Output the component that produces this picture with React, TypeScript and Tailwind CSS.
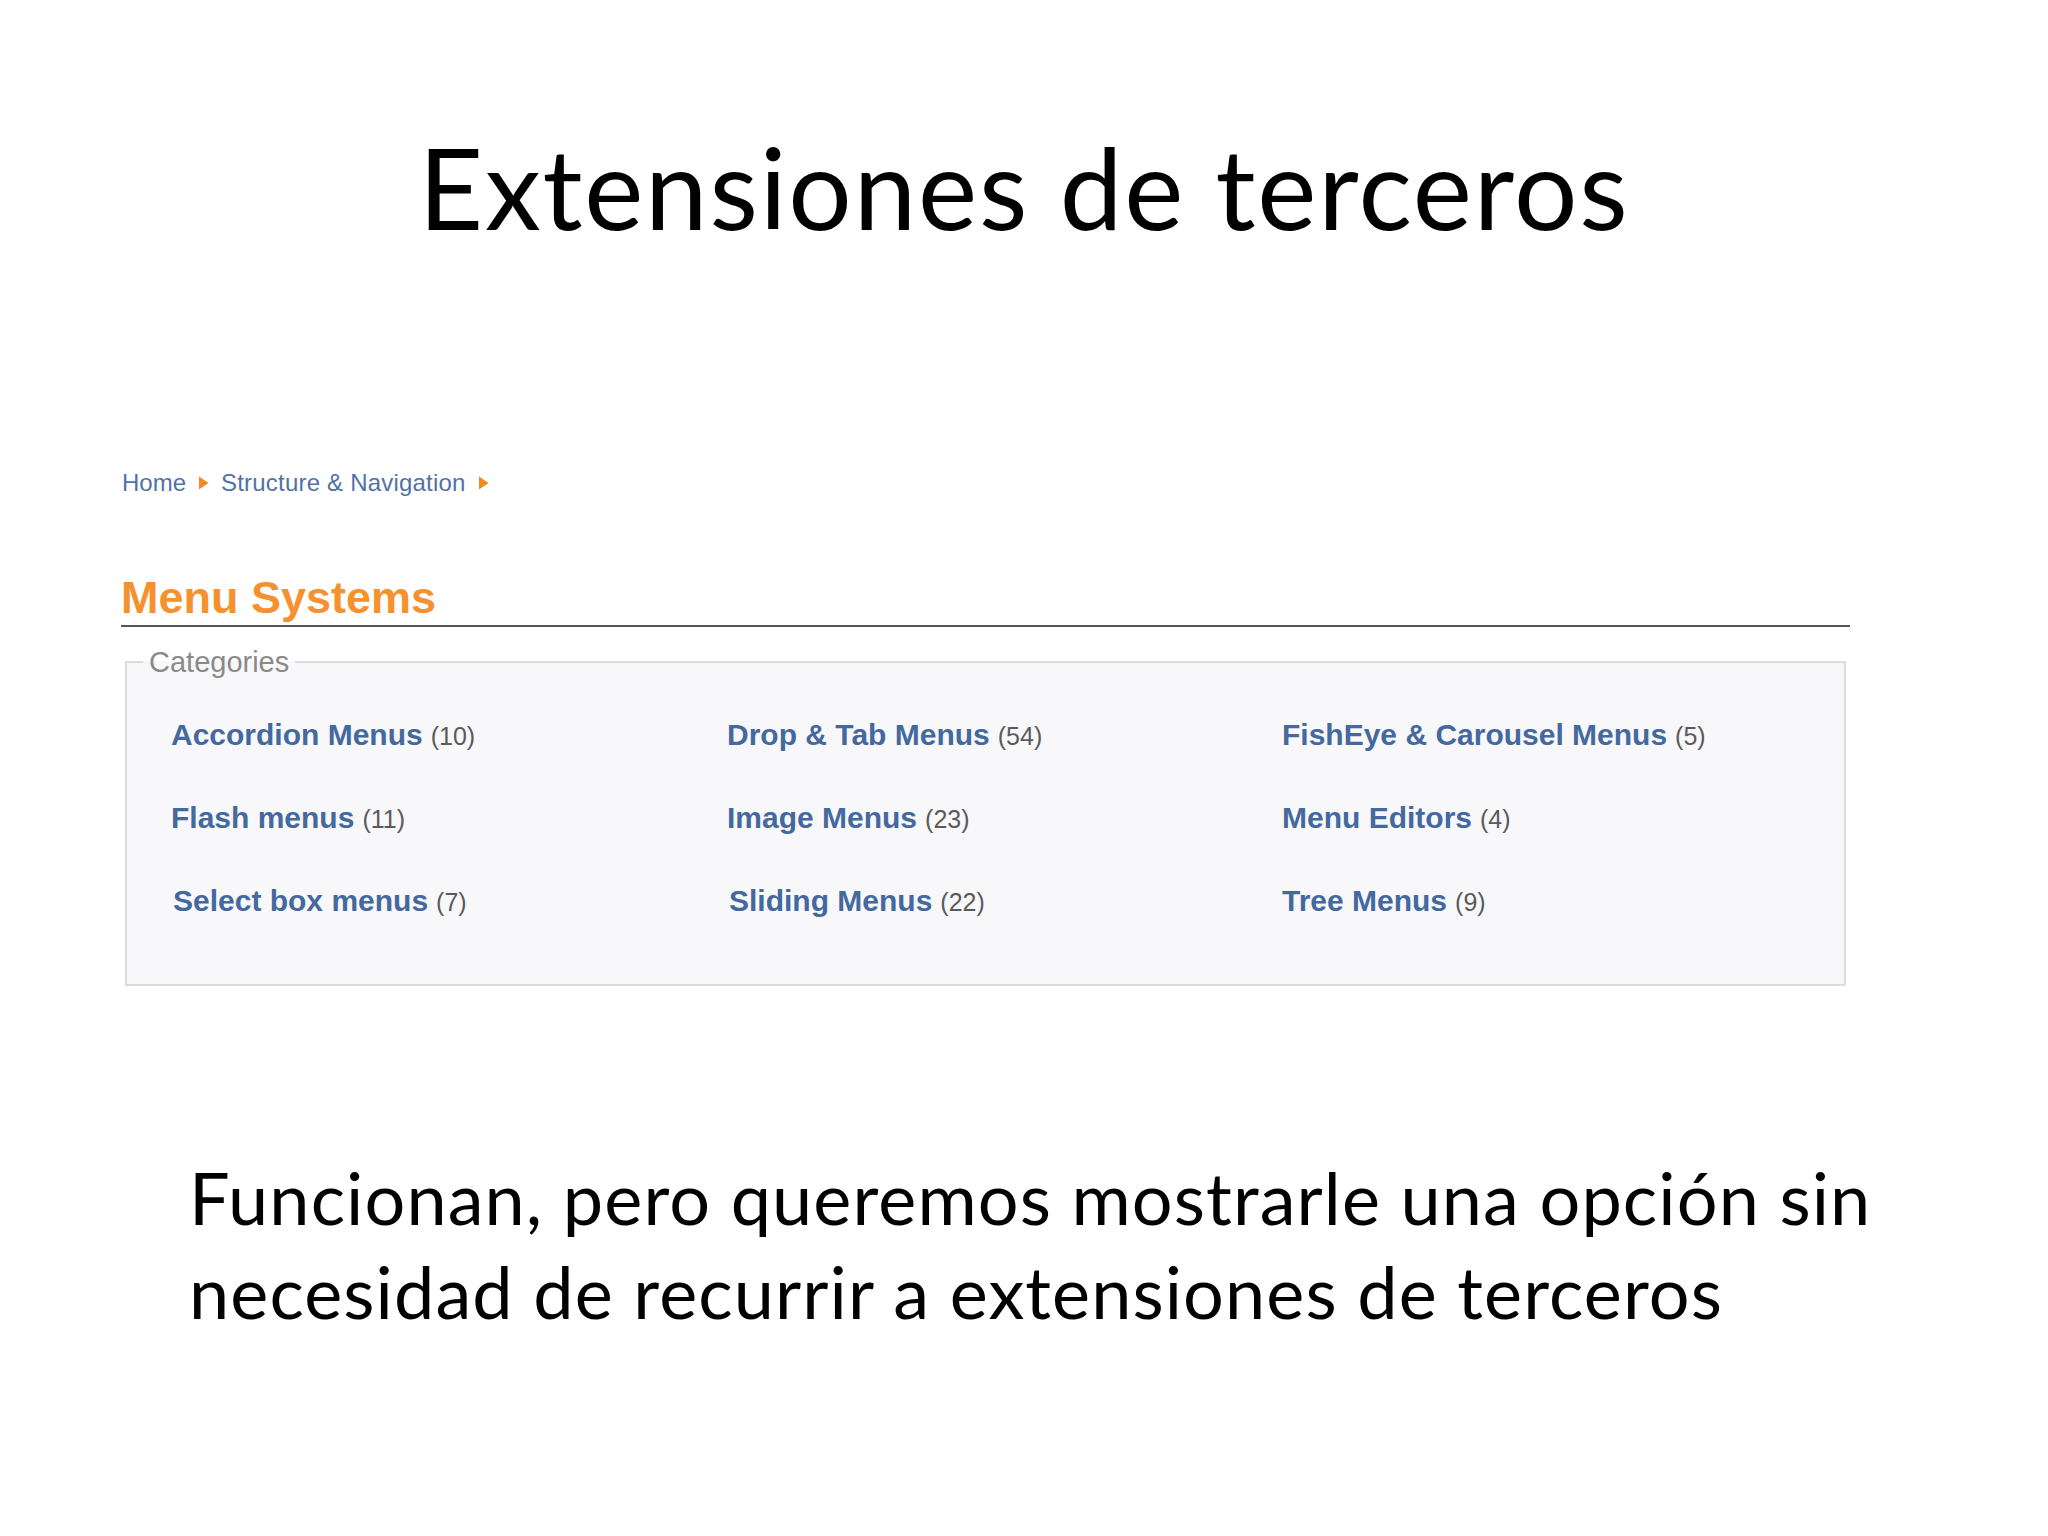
type Category = {
  name: string;
  count: number;
  nudge?: string;
};

const rows: Category[][] = [
  [
    { name: 'Accordion Menus', count: 10 },
    { name: 'Drop & Tab Menus', count: 54 },
    { name: 'FishEye & Carousel Menus', count: 5 },
  ],
  [
    { name: 'Flash menus', count: 11 },
    { name: 'Image Menus', count: 23 },
    { name: 'Menu Editors', count: 4 },
  ],
  [
    { name: 'Select box menus', count: 7, nudge: 'ml-[2px]' },
    { name: 'Sliding Menus', count: 22, nudge: 'ml-[2px]' },
    { name: 'Tree Menus', count: 9 },
  ],
];

function Arrow() {
  return (
    <svg width="11" height="14" viewBox="0 0 11 14" className="shrink-0">
      <path d="M1 0.5 L10.5 7 L1 13.5 Z" fill="#f28a1c" />
    </svg>
  );
}

function Breadcrumb() {
  return (
    <div className="flex h-[26px] items-center gap-[12px] pl-px text-[24px] leading-[26px] text-[#5271a6] [font-family:'Liberation_Sans',Arial,sans-serif]">
      <span>Home</span>
      <Arrow />
      <span className="tracking-[0.2px]">Structure &amp; Navigation</span>
      <Arrow />
    </div>
  );
}

function CategoryBox() {
  return (
    <fieldset className="ml-[4px] mt-[20px] w-[1721px] border-2 border-[#dcdcdc] bg-[#f8f8fa] pb-[42px] pt-[16px] [font-family:'Liberation_Sans',Arial,sans-serif]">
      <legend className="ml-[16px] px-[6px] text-[29px] leading-[30px] text-[#8a8a8a]">Categories</legend>
      <div className="grid grid-cols-[556px_555px_1fr] pl-[44px]">
        {rows.flat().map((c) => (
          <div key={c.name} className={`h-[83px] whitespace-nowrap leading-[83px] ${c.nudge ?? ''}`}>
            <span className="text-[30px] font-bold text-[#44699f]">{c.name}</span>
            <span className="ml-[8px] text-[25px] text-[#5a5a5a]">({c.count})</span>
          </div>
        ))}
      </div>
    </fieldset>
  );
}

export default function App() {
  return (
    <div className="flex h-[1536px] w-[2048px] flex-col overflow-hidden bg-white">
      <h1 className="pt-[131px] text-center text-[112px] leading-[112px] tracking-[1.8px] text-black [font-family:Lato,'Open_Sans',sans-serif]">
        Extensiones de terceros
      </h1>

      <div className="ml-[121px] mt-[227px] w-[1729px]">
        <Breadcrumb />
        <h2 className="mt-[77px] border-b-2 border-[#555555] pb-[2px] text-[45px] font-bold leading-[50px] text-[#f5922f] [font-family:'Liberation_Sans',Arial,sans-serif]">
          Menu Systems
        </h2>
        <CategoryBox />
      </div>

      <p className="ml-[189px] mt-[164px] text-[72px] leading-[94px] tracking-[1.1px] text-black [font-family:Lato,'Open_Sans',sans-serif]">
        <span className="block">Funcionan, pero queremos mostrarle una opción sin</span>
        <span className="block">necesidad de recurrir a extensiones de terceros</span>
      </p>
    </div>
  );
}
